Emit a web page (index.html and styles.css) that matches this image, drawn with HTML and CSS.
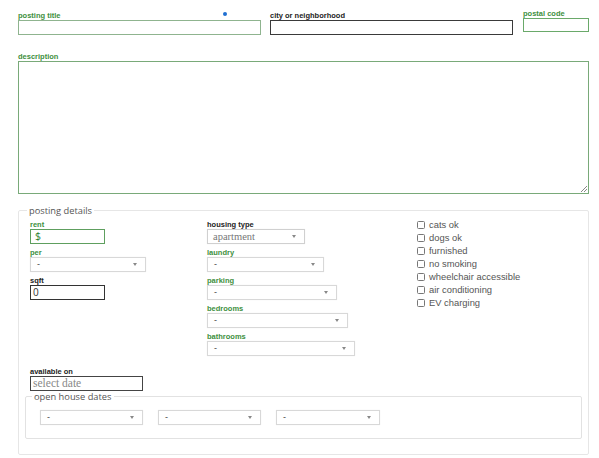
FILE: index.html
```html
<!DOCTYPE html>
<html>
<head>
<meta charset="utf-8">
<link rel="stylesheet" href="styles.css">
</head>
<body>
<div class="page">
  <div class="toprow">
    <div class="field f-title">
      <label class="lbl green">posting title</label>
      <div class="inp inp-title"></div>
      <span class="dot"></span>
    </div>
    <div class="field f-city">
      <label class="lbl">city or neighborhood</label>
      <div class="inp inp-city"></div>
    </div>
    <div class="field f-postal">
      <label class="lbl green">postal code</label>
      <div class="inp inp-postal"></div>
    </div>
  </div>

  <div class="field f-desc">
    <label class="lbl green">description</label>
    <div class="textarea"><span class="grip"></span></div>
  </div>

  <fieldset class="details">
    <legend>posting details</legend>
    <div class="cols">
      <div class="col col1">
        <div class="grp">
          <label class="lbl green">rent</label>
          <div class="inp inp-rent">$</div>
        </div>
        <div class="grp">
          <label class="lbl green">per</label>
          <div class="sel w116"><span>-</span><i class="caret"></i></div>
        </div>
        <div class="grp">
          <label class="lbl">sqft</label>
          <div class="inp inp-sqft">0</div>
        </div>
      </div>
      <div class="col col2">
        <div class="grp">
          <label class="lbl">housing type</label>
          <div class="sel sel-house w98"><span>apartment</span><i class="caret"></i></div>
        </div>
        <div class="grp">
          <label class="lbl green">laundry</label>
          <div class="sel w117"><span>-</span><i class="caret"></i></div>
        </div>
        <div class="grp">
          <label class="lbl green">parking</label>
          <div class="sel w130"><span>-</span><i class="caret"></i></div>
        </div>
        <div class="grp">
          <label class="lbl green">bedrooms</label>
          <div class="sel w141"><span>-</span><i class="caret"></i></div>
        </div>
        <div class="grp">
          <label class="lbl green">bathrooms</label>
          <div class="sel w148"><span>-</span><i class="caret"></i></div>
        </div>
      </div>
      <div class="col col3">
        <div class="chk"><span class="box"></span>cats ok</div>
        <div class="chk"><span class="box"></span>dogs ok</div>
        <div class="chk"><span class="box"></span>furnished</div>
        <div class="chk"><span class="box"></span>no smoking</div>
        <div class="chk"><span class="box"></span>wheelchair accessible</div>
        <div class="chk"><span class="box"></span>air conditioning</div>
        <div class="chk"><span class="box"></span>EV charging</div>
      </div>
    </div>

    <div class="grp avail">
      <label class="lbl">available on</label>
      <div class="inp inp-date">select date</div>
    </div>

    <fieldset class="openhouse">
      <legend>open house dates</legend>
      <div class="ohrow">
        <div class="sel w103"><span>-</span><i class="caret"></i></div>
        <div class="sel w103"><span>-</span><i class="caret"></i></div>
        <div class="sel w104"><span>-</span><i class="caret"></i></div>
      </div>
    </fieldset>
  </fieldset>
</div>
</body>
</html>
```

FILE: styles.css
```css
* { box-sizing: border-box; }
html, body { margin: 0; padding: 0; background: #fff; }
body { font-family: "Liberation Sans", Arial, sans-serif; color: #222; }

.page { padding: 11px 0 0 18px; width: 599px; }

.toprow { display: flex; align-items: flex-start; }
.field { display: flex; flex-direction: column; position: relative; }
.f-title { width: 243px; }
.f-city { width: 243px; margin-left: 9px; }
.f-postal { width: 66px; margin-left: 10px; margin-top: -2px; }

.lbl { display: block; font-size: 7.5px; font-weight: bold; line-height: 9px; color: #222; }
.lbl.green { color: #3d8f3d; }

.inp { height: 15px; border: 1px solid #333; background: #fff; font-size: 10px; line-height: 13px; padding-left: 3px; }
.inp-title { border-color: #8fb48f; }
.inp-city { border-color: #3a3a3a; }
.inp-postal { border-color: #6aa96a; height: 14px; }

.dot { position: absolute; left: 205px; top: 1px; width: 4px; height: 4px; border-radius: 50%; background: #1f6fd1; }

.f-desc { margin-top: 17px; width: 571px; }
.textarea { position: relative; height: 133px; border: 1px solid #79aa79; background: #fff; }
.grip { position: absolute; right: 1px; bottom: 1px; width: 6px; height: 6px;
  background: linear-gradient(135deg, transparent 45%, #888 45%, #888 55%, transparent 55%, transparent 70%, #888 70%, #888 80%, transparent 80%); }

.details { margin: 11px 0 0 0; width: 571px; border: 1px solid #e6e6e6; border-radius: 2px; padding: 5px 11px 15px 11px; min-width: 0; }
.details > legend { margin-left: -3px; padding: 0 2px; font-family: "Open Sans", "Noto Sans", sans-serif; font-size: 9.3px; line-height: 11px; color: #555; }

.cols { display: grid; grid-template-columns: 177px 210px auto; }
.col { display: flex; flex-direction: column; }
.grp { display: flex; flex-direction: column; margin-bottom: 5px; }
.grp .lbl { line-height: 8px; }

.inp-rent { width: 75px; border-color: #5e9f5e; color: #2f7f2f; font-family: "Open Sans", "Noto Sans", sans-serif; font-size: 10.5px; padding-left: 4px; }
.inp-sqft { width: 75px; border-color: #333; font-family: "Open Sans", "Noto Sans", sans-serif; font-size: 10px; padding-left: 2px; color: #333; }

.sel { height: 15px; border: 1px solid #d8d8d8; background: #fff; display: flex; align-items: center; justify-content: space-between; padding: 0 8px 0 6px; font-size: 9px; color: #444; box-shadow: 0 0 1px rgba(0,0,0,0.08); }
.sel span { line-height: 13px; }
.caret { display: block; width: 0; height: 0; border-left: 2.5px solid transparent; border-right: 2.5px solid transparent; border-top: 3px solid #888; }
.sel-house { border-color: #d0d0d0; padding-left: 5px; }
.sel-house span { font-family: "Liberation Serif", "Times New Roman", serif; font-size: 10.5px; color: #777; }

.w98 { width: 98px; }
.w103 { width: 103px; }
.w104 { width: 104px; }
.w116 { width: 116px; }
.w117 { width: 117px; }
.w130 { width: 130px; }
.w141 { width: 141px; }
.w148 { width: 148px; }

.col3 { margin-top: -3px; }
.chk { display: flex; align-items: center; height: 13px; font-size: 9.4px; color: #555; }
.box { width: 8px; height: 8px; border: 1px solid #777; border-radius: 1.5px; margin-right: 4px; background: #fff; }

.avail { margin-top: 7px; margin-bottom: 0; }
.inp-date { width: 113px; border-color: #444; font-family: "Liberation Serif", "Times New Roman", serif; font-size: 11.5px; color: #888; padding-left: 2px; }

.openhouse { margin: 0 0 0 -5px; width: 557px; border: 1px solid #e2e2e2; border-radius: 2px; padding: 8px 14px 13px 14px; min-width: 0; }
.openhouse > legend { margin-left: -8px; padding: 0 2px; font-family: "Open Sans", "Noto Sans", sans-serif; font-size: 9.3px; line-height: 11px; color: #555; }
.ohrow { display: flex; gap: 15px; }
```
